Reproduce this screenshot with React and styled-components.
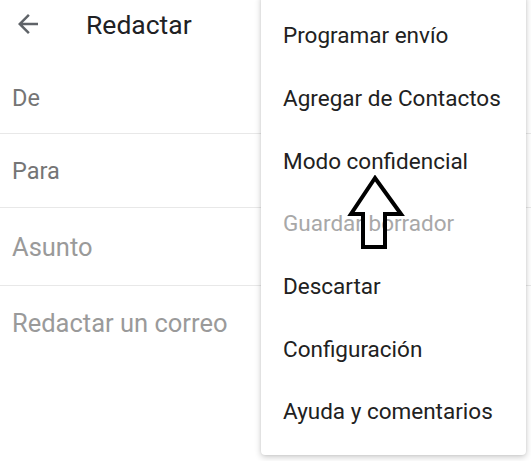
import styled, { createGlobalStyle } from "styled-components";

const GlobalStyle = createGlobalStyle`
  html, body {
    margin: 0;
    padding: 0;
    background: #fff;
  }
  body {
    font-family: Roboto, "Noto Sans", "Liberation Sans", sans-serif;
  }
`;

const Screen = styled.div`
  position: relative;
  width: 531px;
  height: 461px;
  overflow: hidden;
  background: #fff;
`;

const Header = styled.div`
  display: flex;
  align-items: center;
  height: 48px;
  padding-left: 13px;
`;

const BackButton = styled.div`
  width: 30px;
  height: 30px;
  display: flex;
  align-items: center;
  justify-content: center;
  margin-right: 43px;
`;

const Title = styled.h1`
  margin: 0;
  font-size: 26.5px;
  font-weight: 400;
  color: #202124;
`;

const Field = styled.div`
  display: flex;
  align-items: center;
  box-sizing: border-box;
  height: ${(props) => props.h}px;
  padding: ${(props) => props.top || 0}px 0 0 12px;
  border-bottom: ${(props) => (props.last ? "none" : "1px solid #e8e8e8")};
  font-size: ${(props) => (props.light ? "25.5px" : "23.5px")};
  color: ${(props) => (props.light ? "#9a9a9a" : "#757575")};
`;

const Menu = styled.div`
  position: absolute;
  top: -6px;
  left: 261px;
  width: 265px;
  padding: 10px 0 12px;
  background: #fff;
  border-radius: 4px;
  box-shadow: 0 2px 6px rgba(0, 0, 0, 0.22), 0 0 2px rgba(0, 0, 0, 0.08);
`;

const MenuItem = styled.div`
  height: 62.7px;
  display: flex;
  align-items: center;
  padding-left: 22px;
  font-size: 22.5px;
  color: ${(props) => (props.disabled ? "#a8a8a8" : "#212121")};
  white-space: nowrap;
`;

const Pointer = styled.svg`
  position: absolute;
  left: 346px;
  top: 175px;
`;

const items = [
  { label: "Programar envío" },
  { label: "Agregar de Contactos" },
  { label: "Modo confidencial" },
  { label: "Guardar borrador", disabled: true },
  { label: "Descartar" },
  { label: "Configuración" },
  { label: "Ayuda y comentarios" },
];

const App = () => {
  return (
    <Screen>
      <GlobalStyle />
      <Header>
        <BackButton>
          <svg width="30" height="30" viewBox="0 0 24 24">
            <path
              d="M20 11H7.83l5.59-5.59L12 4l-8 8 8 8 1.41-1.41L7.83 13H20v-2z"
              fill="#5f6368"
            />
          </svg>
        </BackButton>
        <Title>Redactar</Title>
      </Header>
      <Field h={86} top={14}>
        De
      </Field>
      <Field h={74}>Para</Field>
      <Field h={78} light>
        Asunto
      </Field>
      <Field h={74} light last>
        Redactar un correo
      </Field>
      <Menu>
        {items.map((item) => (
          <MenuItem key={item.label} disabled={item.disabled}>
            {item.label}
          </MenuItem>
        ))}
      </Menu>
      <Pointer width="60" height="76" viewBox="0 0 60 76">
        <path
          d="M29 3 L5 39 L17 39 L17 72 L39 72 L39 39 L55 39 Z"
          fill="none"
          stroke="#000"
          strokeWidth="4"
          strokeLinejoin="miter"
        />
      </Pointer>
    </Screen>
  );
};

export default App;
